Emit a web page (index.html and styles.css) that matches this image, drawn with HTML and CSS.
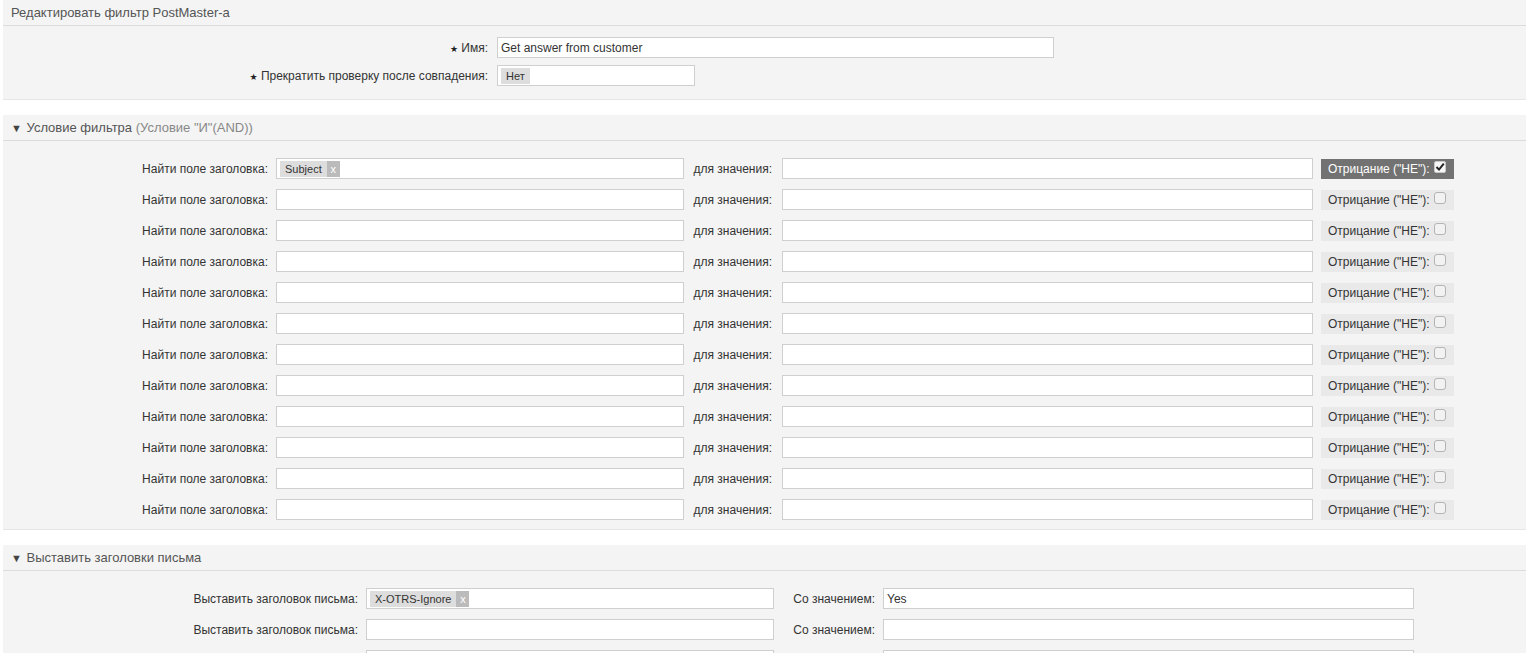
FILE: index.html
```html
<!DOCTYPE html>
<html lang="ru">

<head>
    <meta charset="UTF-8">
    <title>Редактировать фильтр PostMaster-а</title>
    <link rel="stylesheet" href="styles.css">
</head>

<body>

    <!-- Main filter -->
    <div class="widget">
        <div class="widget-header">Редактировать фильтр PostMaster-а</div>
        <div class="widget-body main-body">
            <div class="field-row">
                <label class="label main-label"><span class="req">&#9733;</span> Имя:</label>
                <div class="input name-input">Get answer from customer</div>
            </div>
            <div class="field-row">
                <label class="label main-label"><span class="req">&#9733;</span> Прекратить проверку после совпадения:</label>
                <div class="input stop-input"><span class="chip">Нет</span></div>
            </div>
        </div>
    </div>

    <!-- Filter condition -->
    <div class="widget">
        <div class="widget-header"><span class="toggle">&#9660;</span> Условие фильтра <span class="muted">(Условие "И"(AND))</span></div>
        <div class="widget-body match-body" id="match-rows"></div>
    </div>

    <!-- Set headers -->
    <div class="widget">
        <div class="widget-header"><span class="toggle">&#9660;</span> Выставить заголовки письма</div>
        <div class="widget-body set-body" id="set-rows"></div>
    </div>

    <script>
        const checkIcon = '<svg class="checkbox" viewBox="0 0 12 12"><rect x="0.5" y="0.5" width="11" height="11" rx="1.5" fill="#f6f6f6" stroke="#c8c8c8"/><path d="M2.5 6 L5 8.6 L9.8 2.6" fill="none" stroke="#222" stroke-width="2"/></svg>';
        const emptyIcon = '<svg class="checkbox" viewBox="0 0 12 12"><rect x="0.5" y="0.5" width="11" height="11" rx="2.5" fill="#f2f2f2" stroke="#b4b4b4"/></svg>';

        const matchRows = document.getElementById("match-rows");
        for (let i = 0; i < 12; i++) {
            const first = i === 0;
            matchRows.innerHTML += `
                <div class="field-row match-row">
                    <label class="label match-label">Найти поле заголовка:</label>
                    <div class="input header-input">${first ? '<span class="chip">Subject<span class="chip-x">x</span></span>' : ''}</div>
                    <label class="label value-label">для значения:</label>
                    <div class="input value-input"></div>
                    <div class="negate${first ? ' checked' : ''}">Отрицание ("НЕ"): ${first ? checkIcon : emptyIcon}</div>
                </div>`;
        }

        const setRows = document.getElementById("set-rows");
        for (let i = 0; i < 3; i++) {
            const first = i === 0;
            setRows.innerHTML += `
                <div class="field-row set-row">
                    <label class="label set-label">${i < 2 ? 'Выставить заголовок письма:' : ''}</label>
                    <div class="input header-input">${first ? '<span class="chip">X-OTRS-Ignore<span class="chip-x">x</span></span>' : ''}</div>
                    <label class="label set-value-label">${i < 2 ? 'Со значением:' : ''}</label>
                    <div class="input value-input">${first ? 'Yes' : ''}</div>
                </div>`;
        }
    </script>

</body>

</html>
```

FILE: styles.css
```css
* {
    margin: 0;
    padding: 0;
    box-sizing: border-box;
}

body {
    background-color: #ffffff;
    font-family: "Liberation Sans", Arial, sans-serif;
    font-size: 12px;
    color: #333;
    overflow: hidden;
}

/* Widgets */
.widget {
    margin: 0 0 15px 3px;
    background: #f4f4f4;
}

.widget-header {
    height: 26px;
    line-height: 25px;
    padding-left: 8px;
    font-size: 13px;
    color: #555;
    border-bottom: 1px solid #dcdcdc;
}

.toggle {
    font-size: 11px;
    color: #444;
    margin-right: 1px;
}

.muted {
    color: #888;
}

.widget-body {
    display: flex;
    flex-direction: column;
    border-bottom: 1px solid #e6e6e6;
}

.main-body {
    padding: 11px 0 13px;
    gap: 7px;
}

.match-body {
    padding: 17px 0 9px;
    gap: 10px;
}

.set-body {
    padding: 17px 0 20px;
    gap: 10px;
}

/* Rows */
.field-row {
    display: flex;
    align-items: center;
    height: 21px;
}

.label {
    text-align: right;
    color: #333;
    white-space: nowrap;
}

.main-label {
    width: 485px;
    margin-right: 9px;
}

.req {
    font-family: "DejaVu Sans", sans-serif;
    font-size: 9px;
    color: #222;
    position: relative;
    top: 0;
}

.match-label {
    width: 265px;
    margin-right: 8px;
}

.value-label {
    width: 98px;
    padding-right: 10px;
}

.set-label {
    width: 355px;
    margin-right: 8px;
}

.set-value-label {
    width: 109px;
    padding-right: 8px;
}

.input {
    height: 21px;
    background: #fff;
    border: 1px solid #cfcfcf;
    padding: 0 3px;
    display: flex;
    align-items: center;
    color: #333;
}

.name-input {
    width: 557px;
}

.stop-input {
    width: 198px;
}

.header-input {
    width: 408px;
}

.value-input {
    width: 531px;
}

/* Chips */
.chip {
    display: flex;
    align-items: center;
    height: 16px;
    background: #dddddd;
    padding-left: 5px;
    padding-right: 5px;
    font-size: 11px;
    color: #333;
}

.chip-x {
    display: flex;
    align-items: center;
    justify-content: center;
    height: 16px;
    width: 13px;
    margin-left: 5px;
    margin-right: -5px;
    background: #bbbbbb;
    color: #fff;
    font-size: 11px;
}

/* Negation */
.negate {
    display: flex;
    align-items: center;
    gap: 4px;
    height: 20px;
    width: 133px;
    margin-left: 8px;
    padding-left: 7px;
    background: #e9e9e9;
    color: #333;
    white-space: nowrap;
}

.negate.checked {
    background: #727272;
    color: #fff;
}

.checkbox {
    width: 12px;
    height: 12px;
    position: relative;
    top: -2px;
}
```
